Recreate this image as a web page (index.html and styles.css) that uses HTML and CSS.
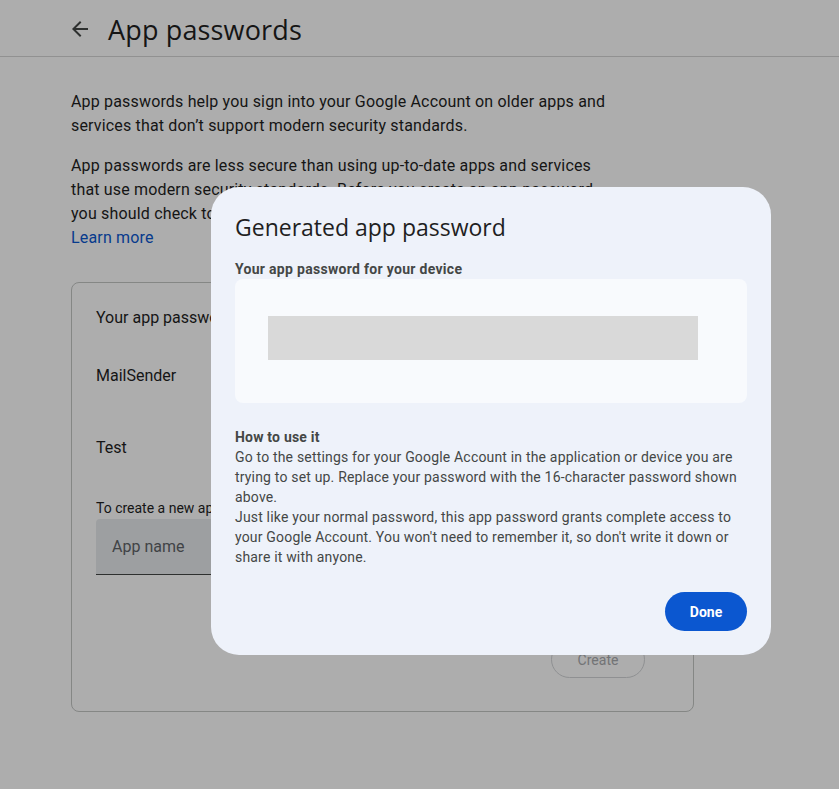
FILE: index.html
```html
<!DOCTYPE html>
<html>
<head>
<meta charset="utf-8">
<link rel="stylesheet" href="styles.css">
</head>
<body>
<div class="page">
  <header class="topbar">
    <div class="topbar-inner">
      <svg class="back" width="24" height="24" viewBox="0 0 24 24"><path d="M20 11H7.83l5.59-5.59L12 4l-8 8 8 8 1.41-1.41L7.83 13H20v-2z" fill="#444746"/></svg>
      <h1 class="title">App passwords</h1>
    </div>
  </header>
  <main class="content">
    <p class="para">App passwords help you sign into your Google Account on older apps and services that don’t support modern security standards.</p>
    <p class="para">App passwords are less secure than using up-to-date apps and services that use modern security standards. Before you create an app password, you should check to see if your app needs this in order to sign in.<br><a class="link" href="#">Learn more</a></p>
    <section class="card">
      <div class="card-title">Your app passwords</div>
      <div class="app-row">MailSender</div>
      <div class="app-row">Test</div>
      <div class="create-label">To create a new app specific password, type a name for it below...</div>
      <div class="field"><span class="field-ph">App name</span></div>
      <div class="create-row"><button class="create-btn">Create</button></div>
    </section>
  </main>
</div>
<div class="scrim"></div>
<div class="dialog">
  <h2 class="dlg-title">Generated app password</h2>
  <div class="dlg-sub">Your app password for your device</div>
  <div class="pw-box"><div class="pw-bar"></div></div>
  <div class="howto">
    <div class="howto-title">How to use it</div>
    <div>Go to the settings for your Google Account in the application or device you are trying to set up. Replace your password with the 16-character password shown above.</div>
    <div>Just like your normal password, this app password grants complete access to your Google Account. You won't need to remember it, so don't write it down or share it with anyone.</div>
  </div>
  <div class="actions"><button class="done">Done</button></div>
</div>
</body>
</html>
```
FILE: styles.css
```css
html, body {
  margin: 0;
  padding: 0;
  background: #ffffff;
  font-family: Roboto, "Open Sans", Arial, sans-serif;
  color: #1f1f1f;
}
.page {
  width: 839px;
  height: 789px;
  overflow: hidden;
}
.topbar {
  height: 57px;
  border-bottom: 1px solid #d6d6d6;
  box-sizing: border-box;
}
.topbar-inner {
  display: flex;
  align-items: center;
  padding-left: 68px;
  height: 56px;
  padding-top: 2px;
  box-sizing: border-box;
}
.back { display: block; margin-right: 16px; }
.title {
  margin: 0;
  font-family: "Open Sans", Roboto, sans-serif;
  font-weight: 400;
  font-size: 27px;
  color: #1f1f1f;
  letter-spacing: 0.15px;
}
.content {
  padding: 33px 0 0 71px;
  width: 623px;
}
.para {
  margin: 0 0 16px 0;
  font-size: 16px;
  line-height: 24px;
  color: #1f1f1f;
  width: 545px;
  letter-spacing: 0.17px;
}
.link { color: #0b57d0; text-decoration: none; }
.card {
  margin-top: 32px;
  border: 1px solid #c4c7c5;
  border-radius: 8px;
  height: 430px;
  box-sizing: border-box;
  padding: 23px 48px 0 24px;
}
.card-title { font-size: 16px; line-height: 24px; }
.app-row { font-size: 16px; line-height: 24px; margin-top: 34px; }
.app-row + .app-row { margin-top: 48px; }
.create-label { font-size: 14px; line-height: 20px; margin-top: 38px; color: #1f1f1f; }
.field {
  margin-top: 1px;
  height: 56px;
  background: #e8ebee;
  border-bottom: 1px solid #444746;
  border-radius: 4px 4px 0 0;
  display: flex;
  align-items: center;
  padding-left: 16px;
  box-sizing: border-box;
}
.field-ph { font-size: 16px; color: #5f6368; }
.create-row { display: flex; justify-content: flex-end; margin-top: 66px; }
.create-btn {
  width: 94px; height: 37px;
  border: 1px solid #d3d5d8;
  border-radius: 20px;
  background: transparent;
  font-family: Roboto, sans-serif;
  font-size: 14px;
  color: #a9abae;
}
.scrim {
  position: fixed;
  inset: 0;
  background: rgba(0, 0, 0, 0.32);
}
.dialog {
  position: absolute;
  left: 211px;
  top: 187px;
  width: 560px;
  height: 468px;
  box-sizing: border-box;
  background: #eef2fa;
  border-radius: 28px;
  padding: 24px 24px 24px 24px;
  display: flex;
  flex-direction: column;
}
.dlg-title {
  margin: 0;
  font-family: "Open Sans", Roboto, sans-serif;
  font-weight: 400;
  font-size: 23px;
  line-height: 32px;
  color: #1f1f1f;
}
.dlg-sub {
  margin-top: 16px;
  font-size: 14px;
  font-weight: 700;
  line-height: 20px;
  color: #444746;
  letter-spacing: 0.3px;
}
.pw-box {
  margin-top: 0;
  height: 124px;
  background: #f8fafd;
  border-radius: 8px;
  padding: 37px 0 0 33px;
  box-sizing: border-box;
}
.pw-bar { width: 430px; height: 44px; background: #d9d9d9; }
.howto {
  margin-top: 24px;
  font-size: 14px;
  line-height: 20px;
  color: #444746;
  letter-spacing: 0.18px;
}
.howto-title { font-weight: 700; color: #444746; letter-spacing: 0.2px; }
.actions { display: flex; justify-content: flex-end; margin-top: auto; }
.done {
  width: 82px; height: 39px;
  border: none;
  border-radius: 20px;
  background: #0b57d0;
  color: #ffffff;
  font-family: Roboto, sans-serif;
  font-size: 14px;
  font-weight: 700;
}
```
